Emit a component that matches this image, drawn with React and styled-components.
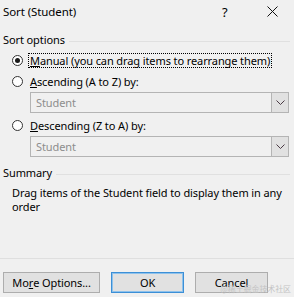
import styled, { createGlobalStyle } from "styled-components"

const GlobalStyle = createGlobalStyle`
  html, body {
    margin: 0;
    background: #f0f0f0;
  }
  body {
    font-family: "Noto Sans", "Open Sans", sans-serif;
    font-size: 11px;
    letter-spacing: -0.1px;
    color: #000;
  }
`

const App = () => {
    return (
        <>
            <GlobalStyle />
            <Dialog>
                <TitleBar>
                    <Title>Sort (Student)</Title>
                    <HelpButton>?</HelpButton>
                    <CloseButton>
                        <svg width="11" height="11" viewBox="0 0 11 11">
                            <path d="M0.5 0.5 L10.5 10.5 M10.5 0.5 L0.5 10.5" stroke="#111" strokeWidth="1" />
                        </svg>
                    </CloseButton>
                </TitleBar>

                <Body>
                    <GroupHeader>
                        <span>Sort options</span>
                        <GroupLine />
                    </GroupHeader>

                    <RadioRow first>
                        <Radio checked />
                        <Label focused><u>M</u>anual (you can drag items to rearrange them)</Label>
                    </RadioRow>
                    <RadioRow>
                        <Radio />
                        <Label><u>A</u>scending (A to Z) by:</Label>
                    </RadioRow>
                    <Select>
                        <SelectValue>Student</SelectValue>
                        <SelectArrow>
                            <svg width="9" height="5" viewBox="0 0 9 5">
                                <path d="M0.5 0.5 L4.5 4.5 L8.5 0.5" fill="none" stroke="#4b3a45" strokeWidth="1" />
                            </svg>
                        </SelectArrow>
                    </Select>
                    <RadioRow first>
                        <Radio />
                        <Label><u>D</u>escending (Z to A) by:</Label>
                    </RadioRow>
                    <Select>
                        <SelectValue>Student</SelectValue>
                        <SelectArrow>
                            <svg width="9" height="5" viewBox="0 0 9 5">
                                <path d="M0.5 0.5 L4.5 4.5 L8.5 0.5" fill="none" stroke="#4b3a45" strokeWidth="1" />
                            </svg>
                        </SelectArrow>
                    </Select>

                    <GroupHeader summary>
                        <span>Summary</span>
                        <GroupLine />
                    </GroupHeader>
                    <SummaryText>
                        Drag items of the Student field to display them in any order
                    </SummaryText>
                </Body>

                <Footer>
                    <Button wide>Mo<u>r</u>e Options...</Button>
                    <Button primary>OK</Button>
                    <Button>Cancel</Button>
                </Footer>

                <Watermark>@稀土掘金技术社区</Watermark>
            </Dialog>
        </>
    )
}

export default App

const Dialog = styled.div`
    position: relative;
    width: 294px;
    height: 297px;
    display: flex;
    flex-direction: column;
    background: #f0f0f0;
    overflow: hidden;
`

const TitleBar = styled.div`
    height: 23px;
    display: flex;
    align-items: center;
    padding-left: 3px;
    font-size: 11.5px;
`

const Title = styled.div`
    flex: 1;
    line-height: 16px;
`

const HelpButton = styled.div`
    width: 10px;
    margin-right: 35px;
    font-size: 13px;
    line-height: 16px;
`

const CloseButton = styled.div`
    width: 11px;
    height: 11px;
    margin-right: 16px;
    display: flex;
`

const Body = styled.div`
    padding: 0 3px 0 3px;
    display: flex;
    flex-direction: column;
`

const GroupHeader = styled.div`
    display: flex;
    align-items: center;
    gap: 4px;
    height: 16px;
    line-height: 16px;
    margin-top: ${props => props.summary ? "8px" : "9px"};
    margin-right: 1px;
`

const GroupLine = styled.div`
    flex: 1;
    border-top: 1px solid #e0e0e0;
    margin-top: 2px;
`

const RadioRow = styled.div`
    height: 21px;
    display: flex;
    align-items: center;
    padding-left: 9px;
    gap: 5px;
    white-space: nowrap;
    margin-top: ${props => props.first ? "2px" : "0"};
`

const Radio = styled.span`
    width: 11px;
    height: 11px;
    flex-shrink: 0;
    box-sizing: border-box;
    border-radius: 50%;
    border: 1px solid #333;
    background: #fff;
    display: flex;
    align-items: center;
    justify-content: center;

    &::after {
        content: "";
        width: 5px;
        height: 5px;
        border-radius: 50%;
        background: ${props => props.checked ? "#1a1a1a" : "transparent"};
    }
`

const Label = styled.span`
    line-height: 13px;
    padding: 0 1px;
    border: 1px dotted ${props => props.focused ? "#000" : "transparent"};
`

const Select = styled.div`
    margin-left: 27px;
    margin-right: 2px;
    height: 21px;
    box-sizing: border-box;
    border: 1px solid #b4b4b4;
    display: flex;
    background: #f0f0f0;
`

const SelectValue = styled.div`
    flex: 1;
    padding-left: 5px;
    line-height: 19px;
    color: #8d8d8d;
`

const SelectArrow = styled.div`
    width: 16px;
    border-left: 1px solid #b4b4b4;
    background: #e1e1e1;
    display: flex;
    align-items: center;
    justify-content: center;
`

const SummaryText = styled.div`
    margin-top: 5px;
    padding-left: 9px;
    line-height: 14px;
`

const Footer = styled.div`
    margin-top: auto;
    border-top: 1px solid #dfdfdf;
    padding: 13px 0 4px 3px;
    display: flex;
    gap: 11px;
`

const Button = styled.div`
    width: ${props => props.wide ? "97px" : "73px"};
    height: 21px;
    box-sizing: border-box;
    border: 1px solid ${props => props.primary ? "#3c8fd6" : "#adadad"};
    box-shadow: ${props => props.primary ? "inset 0 0 0 1px #8ec2ec" : "none"};
    background: #e1e1e1;
    display: flex;
    align-items: center;
    justify-content: center;
    line-height: 14px;
`

const Watermark = styled.div`
    position: absolute;
    right: 3px;
    bottom: 3px;
    font-family: "Noto Sans CJK SC", sans-serif;
    font-size: 8px;
    color: #c4c4c4;
`
